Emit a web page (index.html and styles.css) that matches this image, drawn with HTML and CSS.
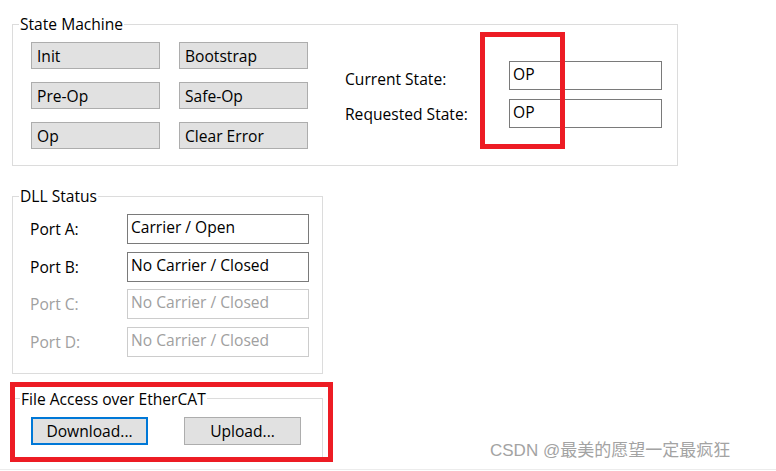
FILE: index.html
```html
<!DOCTYPE html>
<html>
<head>
<meta charset="utf-8">
<link rel="stylesheet" href="styles.css">
</head>
<body>
<div class="screen">
  <fieldset class="group group-state">
    <legend class="group-title">State Machine</legend>
    <div class="state-body">
      <div class="state-buttons">
        <div class="btn">Init</div>
        <div class="btn">Bootstrap</div>
        <div class="btn">Pre-Op</div>
        <div class="btn">Safe-Op</div>
        <div class="btn">Op</div>
        <div class="btn">Clear Error</div>
      </div>
      <div class="state-panel">
        <div class="state-label state-label-current">Current State:</div>
        <div class="textbox state-box">OP</div>
        <div class="state-label">Requested State:</div>
        <div class="textbox state-box">OP</div>
      </div>
    </div>
  </fieldset>

  <fieldset class="group group-dll">
    <legend class="group-title">DLL Status</legend>
    <div class="dll-grid">
      <div class="port-label">Port A:</div>
      <div class="textbox port-box">Carrier / Open</div>
      <div class="port-label">Port B:</div>
      <div class="textbox port-box">No Carrier / Closed</div>
      <div class="port-label is-disabled">Port C:</div>
      <div class="textbox port-box is-disabled">No Carrier / Closed</div>
      <div class="port-label is-disabled">Port D:</div>
      <div class="textbox port-box is-disabled">No Carrier / Closed</div>
    </div>
  </fieldset>

  <fieldset class="group group-foe">
    <legend class="group-title">File Access over EtherCAT</legend>
    <div class="foe-buttons">
      <div class="btn btn-wide btn-focus">Download...</div>
      <div class="btn btn-wide">Upload...</div>
    </div>
  </fieldset>

  <div class="highlight highlight-state"></div>
  <div class="highlight highlight-foe"></div>
  <div class="watermark">CSDN @最美的愿望一定最疯狂</div>
</div>
</body>
</html>
```

FILE: styles.css
```css
* { box-sizing: border-box; }

html, body {
  margin: 0;
  padding: 0;
  background: #ffffff;
}

.screen {
  position: relative;
  width: 776px;
  height: 470px;
  padding: 14px 0 0 12px;
  border-bottom: 1px solid #ececec;
  font-family: "Open Sans", "Noto Sans", sans-serif;
  font-size: 15.6px;
  line-height: 20px;
  color: #000000;
  overflow: hidden;
}

.group {
  margin: 0;
  border: 1px solid #dcdcdc;
  padding: 8px 0 16px 17px;
  min-width: 0;
}

.group-title {
  padding: 0 1px;
  margin-left: -11px;
  line-height: 20px;
}

.group-state {
  width: 666px;
}

.state-body {
  display: flex;
  padding-left: 1px;
}

.state-buttons {
  display: grid;
  grid-template-columns: 129px 129px;
  grid-auto-rows: 27px;
  column-gap: 19px;
  row-gap: 13px;
}

.btn {
  border: 1px solid #adadad;
  background: #e1e1e1;
  padding: 0 5px;
  display: flex;
  align-items: center;
  white-space: nowrap;
}

.state-panel {
  margin-left: 37px;
  padding-top: 19px;
  display: grid;
  grid-template-columns: 164px 153px;
  grid-auto-rows: 29px;
  row-gap: 9px;
}

.state-label {
  display: flex;
  align-items: center;
  white-space: nowrap;
}

.state-label-current {
  padding-top: 7px;
}

.textbox {
  border: 1px solid #7a7a7a;
  background: #ffffff;
  padding: 2px 3px 0;
  white-space: nowrap;
}

.group-dll {
  width: 311px;
  margin-top: 20px;
}

.dll-grid {
  display: grid;
  grid-template-columns: 97px 182px;
  grid-auto-rows: 30px;
  row-gap: 7.5px;
}

.port-label {
  display: flex;
  align-items: center;
  white-space: nowrap;
}

.is-disabled {
  color: #a0a0a0;
}

.textbox.is-disabled {
  border-color: #cccccc;
}

.group-foe {
  width: 311px;
  margin-top: 15px;
  padding-left: 18px;
  padding-bottom: 13px;
}

.foe-buttons {
  display: flex;
  gap: 36px;
}

.btn-wide {
  width: 117px;
  height: 28px;
  justify-content: center;
}

.btn-focus {
  border: 2px solid #0078d7;
}

.highlight {
  position: absolute;
  border: 5px solid #ed1c24;
}

.highlight-state {
  left: 480px;
  top: 32px;
  width: 85px;
  height: 117px;
}

.highlight-foe {
  left: 10px;
  top: 382px;
  width: 323px;
  height: 80px;
}

.watermark {
  position: absolute;
  left: 490px;
  top: 441px;
  font-family: "Liberation Sans", "Noto Sans CJK SC", sans-serif;
  font-size: 17px;
  line-height: 20px;
  color: #a3a3a3;
  white-space: nowrap;
}
```
